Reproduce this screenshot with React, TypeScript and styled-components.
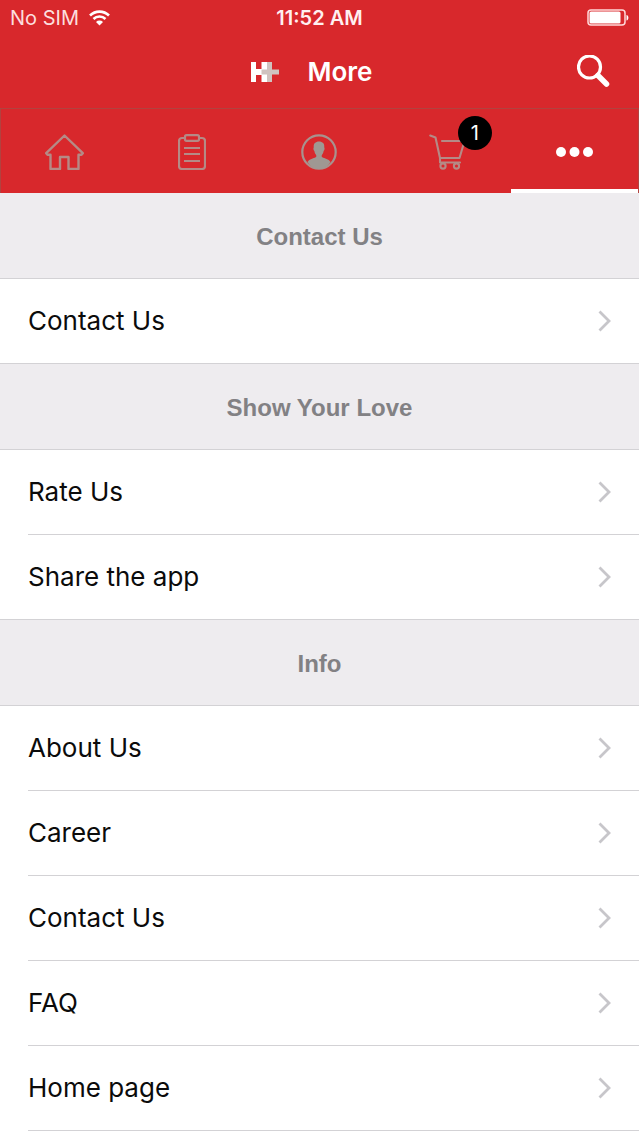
import React from 'react';
import styled, { createGlobalStyle } from 'styled-components';

const GlobalStyle = createGlobalStyle`
  *, *::before, *::after { box-sizing: border-box; }
  body {
    margin: 0;
    background: #fff;
    color: #0b0b0b;
    font-family: Inter, Roboto, sans-serif;
  }
`;

const Screen = styled.div`
  min-height: 100vh;
  overflow: hidden;
`;

const Header = styled.header`
  background: #d8282c;
  color: #fff;
`;

const StatusBar = styled.div`
  display: grid;
  grid-template-columns: 1fr auto 1fr;
  align-items: center;
  height: 36px;
  padding: 0 10px;
  font-size: 20px;
  line-height: 24px;
`;

const Carrier = styled.span`
  display: flex;
  align-items: center;
  gap: 10px;
  color: #fcdede;
`;

const Clock = styled.span`
  font-weight: 600;
  color: #fff0f0;
`;

const Battery = styled.svg`
  justify-self: end;
`;

const TitleBar = styled.div`
  display: grid;
  grid-template-columns: 1fr auto 1fr;
  align-items: center;
  height: 72px;
  padding: 0 28px;
`;

const Brand = styled.div`
  grid-column: 2;
  display: flex;
  align-items: center;
  gap: 28px;
  padding-right: 16px;
`;

const Title = styled.h1`
  margin: 0;
  font-size: 26px;
  line-height: 32px;
  font-weight: 600;
`;

const IconButton = styled.button`
  justify-self: end;
  display: flex;
  padding: 0;
  border: 0;
  background: none;
  color: inherit;
  cursor: pointer;
`;

const Tabs = styled.nav`
  display: grid;
  grid-template-columns: repeat(5, 1fr);
  height: 85px;
  border: solid #b2423f;
  border-width: 1px 1px 0;
`;

const Tab = styled.a<{ $active?: boolean }>`
  display: flex;
  align-items: center;
  justify-content: center;
  padding-top: 6px;
  border-bottom: 4px solid ${(p) => (p.$active ? '#fff' : 'transparent')};
  color: ${(p) => (p.$active ? '#fff' : '#b58a86')};
`;

const CartIcon = styled.span`
  position: relative;
  display: flex;
`;

const Badge = styled.span`
  position: absolute;
  top: -18px;
  left: 29px;
  width: 34px;
  height: 34px;
  border-radius: 50%;
  background: #000;
  color: #fff;
  font-size: 20px;
  line-height: 34px;
  text-align: center;
`;

const SectionTitle = styled.h2`
  margin: 0;
  padding: 29px 0 27px;
  border-bottom: 1px solid #d3d2d5;
  background: #eeecef;
  color: #828184;
  font-family: "Liberation Sans", Arial, sans-serif;
  font-size: 24px;
  line-height: 29px;
  font-weight: 700;
  text-align: center;
`;

const List = styled.ul`
  margin: 0;
  padding: 0;
  list-style: none;

  section:not(:last-child) > & {
    border-bottom: 1px solid #d3d2d5;
  }

  section:last-child > & > li:last-child {
    border-bottom: 1px solid #d3d2d5;
  }
`;

const Item = styled.li`
  margin-left: 28px;

  & + & {
    border-top: 1px solid #d3d2d5;
  }
`;

const ItemLink = styled.a`
  display: flex;
  align-items: center;
  justify-content: space-between;
  height: 84px;
  padding-right: 27px;
  color: inherit;
  font-size: 26px;
  line-height: 32px;
  text-decoration: none;
`;

const Wifi = () => (
  <svg width="21" height="16" viewBox="0 0 21 16" fill="none" stroke="#fff" strokeWidth="2.6" aria-hidden="true">
    <path d="M1 5.5a13.5 13.5 0 0 1 19 0M4.5 9a8.6 8.6 0 0 1 12 0" />
    <path d="M10.500 15.500 7 12a5 5 0 0 1 7 0z" fill="#fff" stroke="none" />
  </svg>
);

const Logo = () => (
  <svg width="29" height="20" viewBox="0 0 29 20" role="img" aria-label="Company logo">
    <path d="M0 0h5v7h5.500V0H16v20h-5.500v-7H5v7H0z" fill="#fff" />
    <path d="M16 0h5v7.500h7v5h-7V20h-5v-7.500h-5.500v-5H16z" fill="#d0c3c0" />
  </svg>
);

const Search = () => (
  <svg width="34" height="34" viewBox="0 0 34 34" fill="none" stroke="#fff" aria-hidden="true">
    <circle cx="12.500" cy="12" r="11" strokeWidth="3.200" />
    <path d="m21 20.500 8.500 8.500" strokeWidth="5.500" strokeLinecap="round" />
  </svg>
);

const Home = () => (
  <svg width="40" height="36" viewBox="0 0 40 36" fill="none" stroke="currentColor" strokeWidth="2.400" strokeLinejoin="round" aria-hidden="true">
    <path d="M19.500 1.500 1.200 19.200l1.300 1.500H5.500V35h9.500V23h8.500v12H33.500V20.700h3l1.300-1.500z" />
  </svg>
);

const Clipboard = () => (
  <svg width="28" height="36" viewBox="0 0 28 36" fill="none" stroke="currentColor" strokeWidth="2.200" aria-hidden="true">
    <path d="M7 4H4a3 3 0 0 0-3 3v25a3 3 0 0 0 3 3h20a3 3 0 0 0 3-3V7a3 3 0 0 0-3-3h-3" />
    <rect x="7" y="1.200" width="14" height="5.600" rx="1.500" />
    <path d="M6 14h16M6 20h16M6 27h16" strokeWidth="1.800" />
  </svg>
);

const Profile = () => (
  <svg width="36" height="36" viewBox="0 0 36 36" aria-hidden="true">
    <circle cx="18" cy="18" r="16.700" fill="none" stroke="#a8928e" strokeWidth="2.200" />
    <path d="M6.500 28c1.800-3 6-3.500 8.200-4.700.9-.6.8-1.700.1-2.900-.8-1-1.200-2-1.400-3.500-1-.3-1.300-3.200-.6-3.700C12.300 9.700 14.500 7.500 18 7.500s5.700 2.200 5.200 5.700c.7.5.4 3.400-.6 3.700-.2 1.500-.6 2.500-1.400 3.500-.7 1.200-.8 2.300.1 2.900 2.200 1.200 6.400 1.700 8.200 4.700C26.500 32.500 22.500 35 18 35S9.500 32.500 6.500 28z" fill="#9f9893" />
  </svg>
);

const Cart = () => (
  <svg width="36" height="36" viewBox="0 0 36 36" fill="none" stroke="currentColor" strokeWidth="2.100" strokeLinecap="round" strokeLinejoin="round" aria-hidden="true">
    <path d="M1.200 1.500 6.500 3.500 11 24h19.500L35.500 7H13M11 24v4.500h20" />
    <circle cx="14" cy="32" r="2.600" />
    <circle cx="27.500" cy="32" r="2.600" />
  </svg>
);

const Dots = () => (
  <svg width="37" height="10" viewBox="0 0 37 10" fill="currentColor" aria-hidden="true">
    <circle cx="5" cy="5" r="5" />
    <circle cx="18.500" cy="5" r="5" />
    <circle cx="32" cy="5" r="5" />
  </svg>
);

const Chevron = () => (
  <svg width="14" height="22" viewBox="0 0 14 22" fill="none" stroke="#c7c6ca" strokeWidth="2.800" aria-hidden="true">
    <path d="m1.500 1.500 9.500 9.500-9.500 9.500" />
  </svg>
);

const sections = [
  { title: 'Contact Us', items: ['Contact Us'] },
  { title: 'Show Your Love', items: ['Rate Us', 'Share the app'] },
  { title: 'Info', items: ['About Us', 'Career', 'Contact Us', 'FAQ', 'Home page'] },
];

export default function App() {
  return (
    <Screen>
      <GlobalStyle />
      <Header>
        <StatusBar>
          <Carrier>No SIM <Wifi /></Carrier>
          <Clock>11:52 AM</Clock>
          <Battery width="42" height="18" viewBox="0 0 42 18" aria-label="Battery">
            <rect x="1" y="1" width="37" height="15" rx="3" fill="none" stroke="#ffd9d9" strokeWidth="1.500" />
            <rect x="2.500" y="2.500" width="31" height="12" rx="1.500" fill="#fff" />
            <path d="M39.500 6c2.500.5 2.500 5 0 5.500z" fill="#fff" />
          </Battery>
        </StatusBar>
        <TitleBar>
          <Brand>
            <Logo />
            <Title>More</Title>
          </Brand>
          <IconButton type="button" aria-label="Search"><Search /></IconButton>
        </TitleBar>
        <Tabs aria-label="Main">
          <Tab href="#home" aria-label="Home"><Home /></Tab>
          <Tab href="#orders" aria-label="Orders"><Clipboard /></Tab>
          <Tab href="#profile" aria-label="Profile"><Profile /></Tab>
          <Tab href="#cart" aria-label="Cart">
            <CartIcon><Cart /><Badge>1</Badge></CartIcon>
          </Tab>
          <Tab href="#more" aria-label="More" aria-current="page" $active><Dots /></Tab>
        </Tabs>
      </Header>
      <main>
        {sections.map(({ title, items }) => (
          <section key={title}>
            <SectionTitle>{title}</SectionTitle>
            <List>
              {items.map((item) => (
                <Item key={item}>
                  <ItemLink href="#item">{item}<Chevron /></ItemLink>
                </Item>
              ))}
            </List>
          </section>
        ))}
      </main>
    </Screen>
  );
}
